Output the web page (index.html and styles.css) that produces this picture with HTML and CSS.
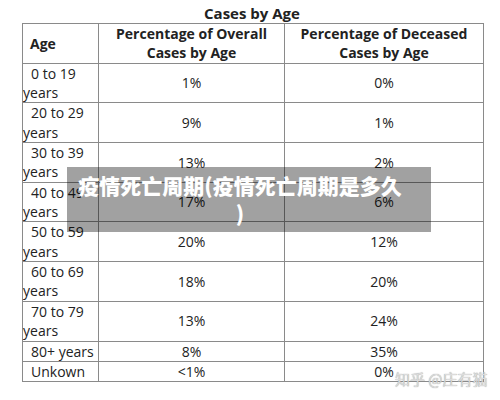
FILE: index.html
```html
<!DOCTYPE html>
<html lang="zh-CN">
<head>
  <meta charset="UTF-8">
  <title>Cases by Age</title>
  <link rel="stylesheet" href="styles.css">
</head>
<body>
  <div class="page">
    <h1 class="title">Cases by Age</h1>

    <table class="cases">
      <colgroup>
        <col class="col-age">
        <col class="col-overall">
        <col class="col-deceased">
      </colgroup>
      <thead>
        <tr>
          <th class="age">Age</th>
          <th>Percentage of Overall Cases by Age</th>
          <th>Percentage of Deceased Cases by Age</th>
        </tr>
      </thead>
      <tbody>
        <tr><td class="age">0 to 19 years</td><td>1%</td><td>0%</td></tr>
        <tr><td class="age">20 to 29 years</td><td>9%</td><td>1%</td></tr>
        <tr><td class="age">30 to 39 years</td><td>13%</td><td>2%</td></tr>
        <tr><td class="age">40 to 49 years</td><td>17%</td><td>6%</td></tr>
        <tr><td class="age">50 to 59 years</td><td>20%</td><td>12%</td></tr>
        <tr><td class="age">60 to 69 years</td><td>18%</td><td>20%</td></tr>
        <tr><td class="age">70 to 79 years</td><td>13%</td><td>24%</td></tr>
        <tr><td class="age">80+ years</td><td>8%</td><td>35%</td></tr>
        <tr><td class="age">Unkown</td><td>&lt;1%</td><td>0%</td></tr>
      </tbody>
    </table>

    <!-- caption over the picture -->
    <div class="caption">疫情死亡周期(疫情死亡周期是多久)</div>
    <div class="watermark">知乎 @庄有猫</div>
  </div>
</body>
</html>
```

FILE: styles.css
```css
body {
  margin: 0;
  background: white;
  font-family: 'Open Sans', 'Noto Sans CJK SC', sans-serif;
  color: #222;
}

.page {
  position: relative;
  width: 500px;
  height: 400px;
  overflow: hidden;
}

.title {
  margin: 0;
  padding-top: 3px;
  height: 20px;
  font-size: 15px;
  line-height: 20px;
  font-weight: 700;
  text-align: center;
  padding-left: 4px;
}

.cases {
  margin-left: 22px;
  border-collapse: collapse;
  table-layout: fixed;
  width: 461px;
  font-size: 14px;
  line-height: 19.35px;
}

.col-age { width: 76px; }
.col-overall { width: 186px; }
.col-deceased { width: 199px; }

.cases th,
.cases td {
  border: 1px solid #8a8a8a;
  padding: 0;
  text-align: center;
  vertical-align: middle;
}

.cases th {
  font-weight: 700;
}

.cases .age {
  text-align: left;
  text-indent: 8px;
}

.cases th.age {
  text-indent: 7px;
}

.caption {
  position: absolute;
  left: 67px;
  top: 167px;
  width: 326px;
  height: 56px;
  padding: 4px 28px 5px 10px;
  background: rgba(0, 0, 0, 0.37);
  color: white;
  font-family: 'Noto Sans CJK SC', sans-serif;
  font-weight: 900;
  font-size: 21px;
  line-height: 28px;
  text-align: center;
  line-break: anywhere;
}

.watermark {
  position: absolute;
  left: 395px;
  top: 370px;
  font-family: 'Noto Sans CJK SC', sans-serif;
  font-size: 15px;
  line-height: 18px;
  color: #dcdcdc;
  text-shadow: 0 0 1px #8c8c8c;
}
```
